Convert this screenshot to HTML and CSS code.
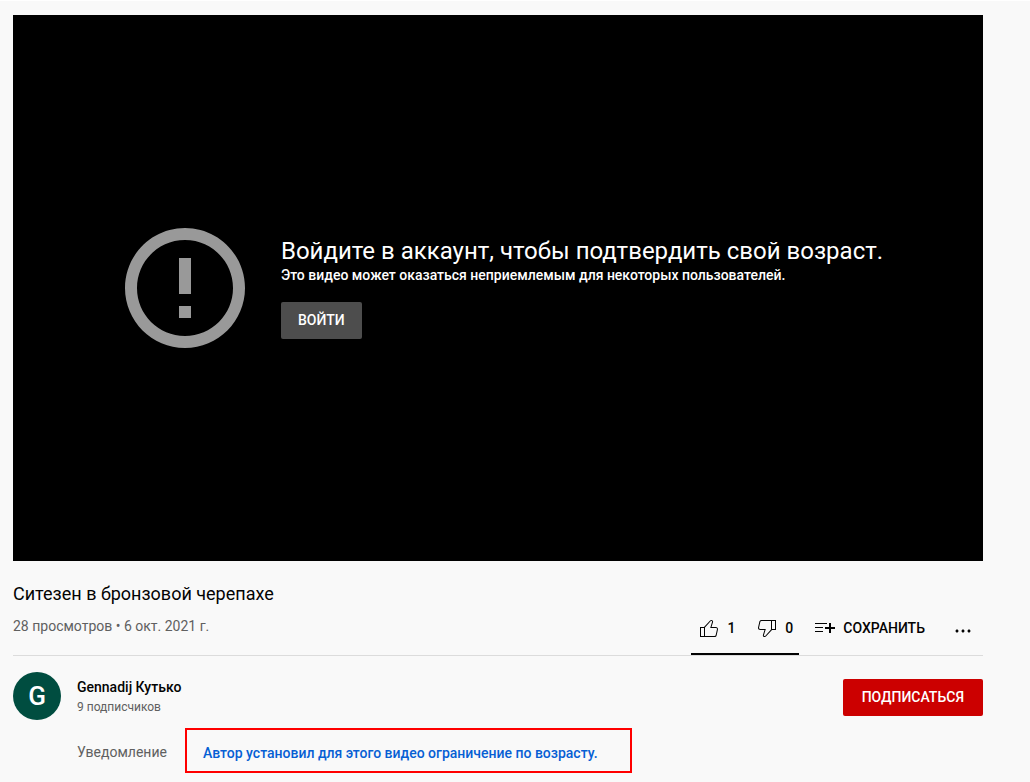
FILE: index.html
```html
<!DOCTYPE html>
<html lang="ru">
<head>
    <meta charset="UTF-8">
    <meta name="viewport" content="width=device-width, initial-scale=1.0">
    <title>Ситезен в бронзовой черепахе</title>
    <link rel="stylesheet" href="styles.css">
</head>
<body>
    <main class="watch">
        <section class="player">
            <svg class="player-icon" viewBox="0 0 24 24" aria-hidden="true">
                <path d="M11 15h2v2h-2zm0-8h2v6h-2zm1-5C6.480 2 2 6.480 2 12s4.480 10 10 10 10-4.480 10-10S17.520 2 12 2zm0 18c-4.420 0-8-3.580-8-8s3.580-8 8-8 8 3.580 8 8-3.580 8-8 8z"/>
            </svg>
            <div class="player-message">
                <h2 class="player-title">Войдите в аккаунт, чтобы подтвердить свой возраст.</h2>
                <p class="player-text">Это видео может оказаться неприемлемым для некоторых пользователей.</p>
                <button type="button" class="btn btn-login">ВОЙТИ</button>
            </div>
        </section>

        <section class="info">
            <h1 class="title">Ситезен в бронзовой черепахе</h1>
            <div class="info-row">
                <p class="stats">28 просмотров • 6 окт. 2021 г.</p>
                <div class="actions">
                    <div class="rating">
                        <button type="button" class="action" aria-label="Нравится">
                            <svg viewBox="0 0 24 24" aria-hidden="true"><path d="M18.77,11h-4.23l1.52-4.94C16.38,5.03,15.54,4,14.38,4c-0.58,0-1.14,0.24-1.52,0.65L7,11H3v10h4h1h9.43c1.06,0,1.98-0.67,2.19-1.61l1.34-6C21.23,12.15,20.18,11,18.77,11z M7,20H4v-8h3V20z M19.98,13.17l-1.34,6C18.54,19.65,18.03,20,17.43,20H8v-8.61l5.6-6.06C13.79,5.12,14.08,5,14.38,5c0.26,0,0.5,0.11,0.63,0.3c0.07,0.1,0.15,0.26,0.09,0.47l-1.52,4.94L13.18,12h1.35h4.23c0.41,0,0.8,0.17,1.03,0.46C19.92,12.61,20.05,12.86,19.98,13.17z"/></svg>
                            <span>1</span>
                        </button>
                        <button type="button" class="action" aria-label="Не нравится">
                            <svg viewBox="0 0 24 24" aria-hidden="true"><path d="M17,4h-1H6.57C5.5,4,4.59,4.67,4.38,5.61l-1.34,6C2.77,12.85,3.82,14,5.23,14h4.23l-1.52,4.94C7.62,19.97,8.46,21,9.62,21c0.58,0,1.14-0.24,1.52-0.65L17,14h4V4H17z M10.4,19.67C10.21,19.88,9.92,20,9.62,20c-0.26,0-0.5-0.11-0.63-0.3c-0.07-0.1-0.15-0.26-0.09-0.47l1.52-4.94l0.4-1.29H9.46H5.23c-0.41,0-0.8-0.17-1.03-0.46c-0.12-0.15-0.25-0.4-0.18-0.72l1.34-6C5.46,5.35,5.97,5,6.57,5H16v8.61L10.4,19.67z M20,13h-3V5h3V13z"/></svg>
                            <span>0</span>
                        </button>
                    </div>
                    <button type="button" class="action action-save">
                        <svg viewBox="0 0 24 24" aria-hidden="true"><path d="M22,13h-4v4h-2v-4h-4v-2h4V7h2v4h4V13z M14,7H2v1h12V7z M2,12h8v-1H2V12z M2,16h8v-1H2V16z"/></svg>
                        <span>СОХРАНИТЬ</span>
                    </button>
                    <button type="button" class="action action-more" aria-label="Ещё">
                        <svg viewBox="0 0 24 24" aria-hidden="true"><path d="M7.5,15c0,0.83-0.67,1.5-1.5,1.5S4.5,15.83,4.5,15s0.67-1.5,1.5-1.5S7.5,14.17,7.5,15z M12,13.5c-0.83,0-1.5,0.67-1.5,1.5s0.67,1.5,1.5,1.5s1.5-0.67,1.5-1.5S12.83,13.5,12,13.5z M18,13.5c-0.83,0-1.5,0.67-1.5,1.5s0.67,1.5,1.5,1.5s1.5-0.67,1.5-1.5S18.83,13.5,18,13.5z"/></svg>
                    </button>
                </div>
            </div>
        </section>

        <section class="owner">
            <a href="#" class="avatar" aria-label="Gennadij Кутько">G</a>
            <div class="owner-info">
                <a href="#" class="owner-name">Gennadij Кутько</a>
                <p class="subscribers">9 подписчиков</p>
            </div>
            <button type="button" class="btn btn-subscribe">ПОДПИСАТЬСЯ</button>
        </section>

        <section class="notice">
            <span class="notice-label">Уведомление</span>
            <div class="notice-box">
                <a href="#" class="notice-link">Автор установил для этого видео ограничение по возрасту.</a>
            </div>
        </section>
    </main>
</body>
</html>
```
FILE: styles.css
```css
* {
    box-sizing: border-box;
}
body {
    margin: 0;
    border-top: 1px solid #fff;
    background: #f9f9f9;
    color: #030303;
    font-family: Roboto, Arial, sans-serif;
    font-size: 14px;
    line-height: 20px;
}
h1, h2, p {
    margin: 0;
    font-weight: 400;
}
a {
    color: inherit;
    text-decoration: none;
}
button {
    border: 0;
    font-family: inherit;
    font-size: 14px;
    font-weight: 500;
    cursor: pointer;
}
.watch {
    padding: 14px 47px 8px 13px;
}

/* Плеер */
.player {
    display: flex;
    align-items: center;
    justify-content: center;
    gap: 24px;
    aspect-ratio: 16 / 9;
    background: #000;
    color: #fff;
}
.player-icon {
    flex: none;
    width: 144px;
    height: 144px;
    fill: #999;
}
.player-title {
    font-size: 24px;
    line-height: 28px;
}
.player-text {
    font-weight: 500;
}
.btn {
    height: 37px;
    border-radius: 2px;
    color: #fff;
    white-space: nowrap;
}
.btn-login {
    margin-top: 17px;
    padding: 0 17px;
    background: #4d4d4d;
}

/* Название и кнопки */
.info {
    padding-top: 20px;
    border-bottom: 1px solid #dcdcdc;
}
.title {
    font-size: 18px;
    line-height: 26px;
}
.info-row {
    display: flex;
    align-items: flex-start;
    justify-content: space-between;
}
.stats {
    margin-top: 9px;
    color: #606060;
}
.actions {
    display: flex;
    gap: 8px;
}
.rating {
    display: flex;
    gap: 8px;
    height: 48px;
    border-bottom: 2px solid #030303;
}
.action {
    display: flex;
    align-items: center;
    gap: 6px;
    height: 42px;
    padding: 0 6px;
    background: none;
    color: #030303;
}
.action-save {
    padding-right: 10px;
}
.action-more {
    padding: 0 8px;
}
.action svg {
    width: 24px;
    height: 24px;
    fill: currentColor;
}

/* Канал */
.owner {
    display: flex;
    align-items: center;
    padding-top: 16px;
}
.avatar {
    width: 48px;
    height: 48px;
    margin-right: 16px;
    border-radius: 50%;
    background: #004d40;
    color: #fff;
    font-size: 26px;
    font-weight: 500;
    line-height: 48px;
    text-align: center;
}
.owner-info {
    flex: 1;
    padding-top: 2px;
}
.owner-name {
    font-weight: 500;
}
.subscribers {
    color: #606060;
    font-size: 12px;
}
.btn-subscribe {
    margin-top: 3px;
    padding: 0 19px;
    background: #c00;
}

/* Уведомление */
.notice {
    display: flex;
    align-items: center;
    gap: 18px;
    margin: 8px 0 0 64px;
    color: #606060;
}
.notice-label {
    padding-top: 3px;
}
.notice-box {
    padding: 13px 32px 8px 16px;
    border: 2px solid #f00;
}
.notice-link {
    color: #065fd4;
    font-weight: 500;
}
```
